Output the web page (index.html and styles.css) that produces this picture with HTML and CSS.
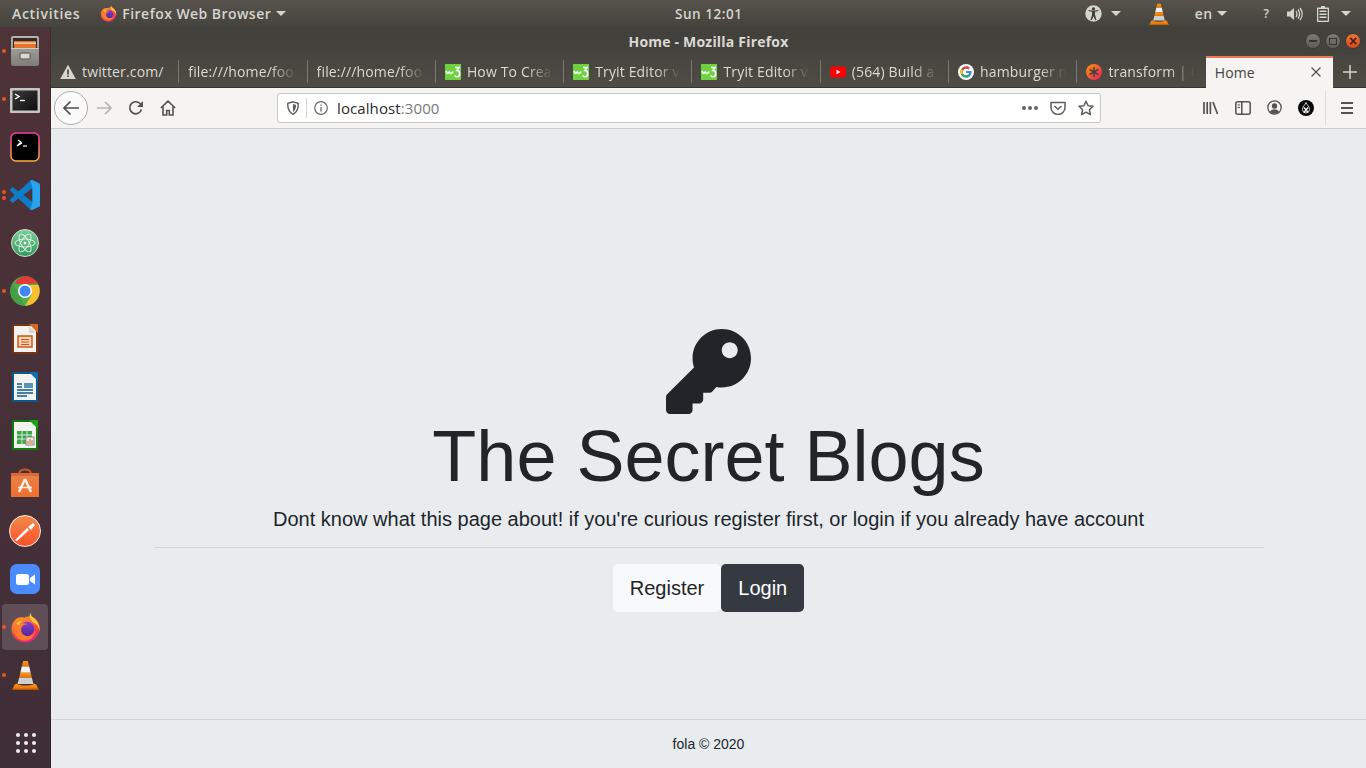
FILE: index.html
```html
<!DOCTYPE html>
<html lang="en">
<head>
<meta charset="utf-8">
<title>Home</title>
<link rel="stylesheet" href="styles.css">
</head>
<body>
<svg class="defs" width="0" height="0" aria-hidden="true">
  <defs>
    <linearGradient id="ffg" x1=".2" y1="0" x2=".6" y2="1"><stop offset="0" stop-color="#ffa02a"/><stop offset=".55" stop-color="#ff4a3a"/><stop offset="1" stop-color="#e3208a"/></linearGradient>
    <linearGradient id="ffp" x1="0" y1="0" x2="0" y2="1"><stop offset="0" stop-color="#8a3fd0"/><stop offset="1" stop-color="#4a2a9a"/></linearGradient>
    <linearGradient id="cone" x1="0" y1="0" x2="0" y2="1"><stop offset="0" stop-color="#ff9a1a"/><stop offset="1" stop-color="#e96d00"/></linearGradient>
    <symbol id="firefox" viewBox="0 0 32 32">
      <path d="M16 31.500C8 31.500 1.500 25.500 1.500 17.500 1.500 13 3.500 9.500 6 7.500 8.500 5.500 12 5 15 6 19 3.500 24 4 27 7.500 30 11 31 14 30.500 18 29.500 25.500 24 31.500 16 31.500z" fill="url(#ffg)"/>
      <path d="M21 .5C21.500 4 23 5.500 26 8 29 10.500 31 14 30.500 19.500 29.500 15 27 11.500 23.500 10.500 21 8 19.500 5 21 .5z" fill="#ffcf3a"/>
      <circle cx="17.500" cy="17.500" r="7.500" fill="url(#ffp)"/>
      <path d="M4 12.500C6 9 10 7.500 14 8.500 12 9.500 11 10.500 10.500 12.500 13 11 16 11.500 17.500 13 14.500 13 12 14.500 11.500 17.500 11 21 14 25 18.500 25 22 25 25 22.500 26 19 26 25 21 29.500 15.500 29.500 9 29.500 4 24 3.500 18 3.300 16 3.500 14 4 12.500z" fill="#ff7a2a"/>
      <path d="M6.500 11.500C8 9.500 10.500 8.800 13 9 11.500 10 10.300 11.500 10 13.500 8.500 13.500 7.300 12.700 6.500 11.500z" fill="#ffc23a"/>
    </symbol>
    <symbol id="vlc" viewBox="0 0 28 32">
      <path d="M11.500 1h5l1.500 6H10z" fill="url(#cone)"/>
      <path d="M10 7h8l1.500 6.500H8.500z" fill="#f2f2f2"/>
      <path d="M8.500 13.500h11l1.300 5.500H7.200z" fill="url(#cone)"/>
      <path d="M7.200 19h13.600l1.700 6.500h-17z" fill="#cfcfcf"/>
      <path d="M5 25l-2.500 1L0 31.500h28L25.500 26 23 25c-1 3-17 3-18 0z" fill="url(#cone)"/>
      <path d="M0 30.500h28l.0 1H0z" fill="#c95f00"/>
    </symbol>
    <symbol id="w3" viewBox="0 0 16 16">
      <rect width="16" height="16" fill="#6fd13f"/>
      <path d="M1 7c.5 2.200 1.700 3 2.500 1.700.4-.8.8-.8 1.200 0 .8 1.400 2.300 1.300 3.300-1.200" fill="none" stroke="#fff" stroke-width="1.600"/>
      <path d="M10 3.500h4l-2 3c1.800 0 2.700 1.300 2.700 3 0 2-1.300 3.300-2.700 3.300-1 0-1.800-.5-2.300-1.300" fill="none" stroke="#fff" stroke-width="1.600"/>
    </symbol>
  </defs>
</svg>

<header class="topbar">
  <div class="top-left">
    <span class="top-item activities">Activities</span>
    <span class="top-app">
      <svg class="ic16" aria-hidden="true"><use href="#firefox"/></svg>
      <span class="top-item">Firefox Web Browser</span>
      <i class="caret"></i>
    </span>
  </div>
  <div class="top-clock">Sun 12:01</div>
  <div class="top-right">
    <span class="tray tray-a11y">
      <svg class="tray-svg" width="17" height="17" viewBox="0 0 17 17" aria-hidden="true"><circle cx="8.500" cy="8.500" r="8.200" fill="#d6d4cf"/><circle cx="8.500" cy="3.900" r="1.600" fill="#3f3e38"/><path d="M3.500 6l3.500.8v3L5.500 15h1.400l1.600-3.800L10.100 15h1.400L10 9.800v-3l3.500-.8-.2-1.100-4.800.9-4.800-.9z" fill="#3f3e38"/></svg>
      <i class="caret"></i>
    </span>
    <svg class="tray-vlc" width="20" height="22" aria-hidden="true"><use href="#vlc"/></svg>
    <span class="tray tray-en"><span class="top-item">en</span><i class="caret"></i></span>
    <span class="tray-q">?</span>
    <svg class="tray-vol" width="16" height="14" viewBox="0 0 16 14" aria-hidden="true"><path d="M0 4.500h3L7 1v12L3 9.500H0z" fill="#d6d4cf"/><path d="M9 4c1.200 1.800 1.200 4.200 0 6M11 2.500c2 2.700 2 6.300 0 9M13 1c2.800 3.600 2.800 8.400 0 12" fill="none" stroke="#d6d4cf" stroke-width="1.300"/></svg>
    <svg class="tray-bat" width="12" height="16" viewBox="0 0 12 16" aria-hidden="true"><path d="M4 0h4v1.500h3c.6 0 1 .4 1 1V15c0 .6-.4 1-1 1H1c-.6 0-1-.4-1-1V2.500c0-.6.4-1 1-1h3z" fill="#d6d4cf"/><path d="M1.300 3h9.400v11.700H1.300z" fill="#4b4a44"/><path d="M2.500 4.500h7v1.500h-7zM2.500 7.500h7V9h-7zM2.500 10.500h7V12h-7z" fill="#d6d4cf"/></svg>
    <i class="caret caret-last"></i>
  </div>
</header>

<div class="desktop">
  <nav class="dock">
    <div class="dock-item"><i class="dot"></i>
      <svg width="30" height="30" viewBox="0 0 30 30" aria-hidden="true"><defs><linearGradient id="cab" x1="0" y1="0" x2="0" y2="1"><stop offset="0" stop-color="#b5b3ae"/><stop offset="1" stop-color="#7f7d78"/></linearGradient></defs><rect x="1" y="0" width="28" height="30" rx="2" fill="url(#cab)"/><rect x="3" y="2" width="24" height="10" fill="#2e2d2a"/><rect x="4" y="5" width="22" height="7" fill="#e2732c"/><rect x="4" y="6.500" width="22" height="1.300" fill="#f6d9b8"/><rect x="1" y="12" width="28" height="1" fill="#cfcdc8"/><rect x="10" y="17" width="10" height="6" rx="1" fill="#d9d7d2" stroke="#55534f"/></svg>
    </div>
    <div class="dock-item dock-term"><i class="dot"></i>
      <svg width="30" height="25" viewBox="0 0 30 25" aria-hidden="true"><defs><linearGradient id="trm" x1="0" y1="0" x2="1" y2="1"><stop offset="0" stop-color="#3a3a3a"/><stop offset="1" stop-color="#0e0e0e"/></linearGradient></defs><rect width="30" height="25" rx="1" fill="#c4c6c3"/><rect x="2.500" y="2.500" width="25" height="20" fill="url(#trm)"/><path d="M5 6l4 2.500L5 11" fill="none" stroke="#fff" stroke-width="1.400"/><path d="M10 12.500h5" stroke="#fff" stroke-width="1.300"/></svg>
    </div>
    <div class="dock-item">
      <svg width="30" height="30" viewBox="0 0 30 30" aria-hidden="true"><defs><linearGradient id="hy" x1="0" y1="0" x2="0" y2="1"><stop offset="0" stop-color="#f038a8"/><stop offset="1" stop-color="#ffb03a"/></linearGradient></defs><rect x="1" y="1" width="28" height="28" rx="5" fill="#000" stroke="url(#hy)" stroke-width="1.500"/><path d="M8 8l3 2-4 4 5-3" fill="none" stroke="#fff" stroke-width="1.200"/><path d="M13 14h4" stroke="#fff" stroke-width="1.200"/></svg>
    </div>
    <div class="dock-item"><i class="dot dot-up"></i><i class="dot dot-down"></i>
      <svg width="30" height="30" viewBox="0 0 100 100" aria-hidden="true"><path fill-rule="evenodd" d="M96 11L75 1a6 6 0 0 0-7 1L28 38 11 25a4 4 0 0 0-5 0L1 30a4 4 0 0 0 0 6L16 50 1 64a4 4 0 0 0 0 6l5 5a4 4 0 0 0 5 0L28 62l40 36a6 6 0 0 0 7 1l21-10a6 6 0 0 0 4-6V17a6 6 0 0 0-4-6zM75 27L45 50l30 23z" fill="#0e7cc8"/><path d="M75 1l21 10a6 6 0 0 1 4 6v66a6 6 0 0 1-4 6L75 99a6 6 0 0 1-7-1L75 73V27L68 2a6 6 0 0 1 7-1z" fill="#2aa3ee"/></svg>
    </div>
    <div class="dock-item">
      <svg width="28" height="28" viewBox="0 0 28 28" aria-hidden="true"><defs><linearGradient id="atom" x1="0" y1="0" x2="0" y2="1"><stop offset="0" stop-color="#7ccf9c"/><stop offset="1" stop-color="#2f9a5c"/></linearGradient></defs><circle cx="14" cy="14" r="13.500" fill="url(#atom)" stroke="#d9d9d5"/><g fill="none" stroke="#e9f5ec" stroke-width=".9"><ellipse cx="14" cy="14" rx="10" ry="4"/><ellipse cx="14" cy="14" rx="10" ry="4" transform="rotate(60 14 14)"/><ellipse cx="14" cy="14" rx="10" ry="4" transform="rotate(120 14 14)"/></g><circle cx="14" cy="14" r="1.500" fill="#fff"/></svg>
    </div>
    <div class="dock-item"><i class="dot"></i>
      <svg width="30" height="30" viewBox="0 0 30 30" aria-hidden="true"><circle cx="15" cy="15" r="14.700" fill="#4caf50"/><path d="M15 .3A14.700 14.700 0 0 1 27.700 7.600L15 8H4.200A14.700 14.700 0 0 1 15 .3z" fill="#e53935"/><path d="M2.800 7L9 18l5.500 11.700A14.700 14.700 0 0 1 .3 15 14.700 14.700 0 0 1 2.800 7z" fill="#43a047"/><path d="M28.400 9A14.700 14.700 0 0 1 15 29.700L21.500 19 20 9z" fill="#fbc02d"/><circle cx="15" cy="15" r="7" fill="#fff"/><circle cx="15" cy="15" r="5.500" fill="#4285f4"/></svg>
    </div>
    <div class="dock-item">
      <svg width="26" height="30" viewBox="0 0 26 30" aria-hidden="true"><rect width="26" height="30" rx="1.500" fill="#7a3310"/><rect x="2" y="2" width="22" height="26" fill="#f4f2ee"/><path d="M17 0h9v9z" fill="#d9671f"/><path d="M17 2v7h7" fill="#d8d6d0"/><rect x="6" y="12" width="14" height="11" fill="#f7d3b4" stroke="#c75a1a" stroke-width="1.500"/><path d="M9 15.500h8M9 18h8M9 20.500h8" stroke="#c75a1a"/></svg>
    </div>
    <div class="dock-item">
      <svg width="26" height="30" viewBox="0 0 26 30" aria-hidden="true"><rect width="26" height="30" rx="1.500" fill="#0a5a8c"/><rect x="2" y="2" width="22" height="26" fill="#f4f2ee"/><path d="M17 0h9v9z" fill="#0a6fb0"/><path d="M5 12h5M5 15h5M5 18h16M5 21h16M5 24h10" stroke="#0a5a8c" stroke-width="1.500"/><rect x="12" y="11" width="9" height="5" fill="#5a91b5"/></svg>
    </div>
    <div class="dock-item">
      <svg width="26" height="30" viewBox="0 0 26 30" aria-hidden="true"><rect width="26" height="30" rx="1.500" fill="#0f7a0f"/><rect x="2" y="2" width="22" height="26" fill="#f4f2ee"/><path d="M17 0h9v9z" fill="#13a313"/><rect x="5" y="11" width="15" height="13" fill="#3aa84a"/><path d="M5 15h15M5 19h15M10 11v13M15 11v13" stroke="#e8f5e9" stroke-width=".9"/><rect x="14" y="17" width="8" height="8" fill="#eeeeec" stroke="#888"/><path d="M16 24v-3M18 24v-5M20 24v-4" stroke="#d9671f"/></svg>
    </div>
    <div class="dock-item">
      <svg width="30" height="30" viewBox="0 0 30 30" aria-hidden="true"><defs><linearGradient id="bag" x1="0" y1="0" x2="0" y2="1"><stop offset="0" stop-color="#e8824a"/><stop offset="1" stop-color="#ef7030"/></linearGradient></defs><path d="M9 6c0-6 12-6 12 0" fill="none" stroke="#c9562a" stroke-width="2"/><path d="M1 5h28v24H1z" fill="url(#bag)"/><path d="M1 5h28v3H1z" fill="#d9693a"/><path d="M15 11l-6 13M15 11l6 13" stroke="#fdf0e6" stroke-width="2.400" fill="none"/><path d="M8 19.500h14" stroke="#fdf0e6" stroke-width="1.600"/></svg>
    </div>
    <div class="dock-item">
      <svg width="32" height="32" viewBox="0 0 32 32" aria-hidden="true"><defs><linearGradient id="pm" x1="0" y1="0" x2="0" y2="1"><stop offset="0" stop-color="#f58a4a"/><stop offset="1" stop-color="#f9502a"/></linearGradient></defs><circle cx="16" cy="16" r="15.500" fill="url(#pm)" stroke="#f2efe9"/><path d="M6 25l2 1 12-11-2-2zM19 12l3 3 4-5-2-2z" fill="#fff"/></svg>
    </div>
    <div class="dock-item">
      <svg width="30" height="30" viewBox="0 0 30 30" aria-hidden="true"><rect width="30" height="30" rx="7" fill="#4a8cff"/><rect x="6" y="10" width="13" height="11" rx="2.500" fill="#fff"/><path d="M20 14l5-3.500v10L20 17z" fill="#fff"/></svg>
    </div>
    <div class="dock-item dock-active"><i class="dot"></i>
      <svg width="31" height="31" aria-hidden="true"><use href="#firefox"/></svg>
    </div>
    <div class="dock-item"><i class="dot"></i>
      <svg width="27" height="30" aria-hidden="true"><use href="#vlc"/></svg>
    </div>
    <div class="dock-grid" aria-hidden="true">
      <i></i><i></i><i></i><i></i><i></i><i></i><i></i><i></i><i></i>
    </div>
  </nav>

  <div class="window">
    <div class="titlebar">
      <span class="win-title">Home - Mozilla Firefox</span>
      <div class="win-btns">
        <span class="win-btn"><i class="glyph-min"></i></span>
        <span class="win-btn"><i class="glyph-max"></i></span>
        <span class="win-btn win-close">×</span>
      </div>
    </div>
    <div class="tabstrip">
      <div class="tab">
        <svg class="fav" viewBox="0 0 16 16" aria-hidden="true"><path d="M8 .8l7.800 14.200H.2z" fill="#d8d6d0"/><path d="M7.200 5.500h1.600v5H7.200zM7.200 11.500h1.600v1.600H7.200z" fill="#45433d"/></svg>
        <span class="tab-text tab-text-full">twitter.com/</span>
      </div>
      <div class="tab"><span class="tab-text">file:///home/foo</span></div>
      <div class="tab"><span class="tab-text">file:///home/foo</span></div>
      <div class="tab"><svg class="fav" aria-hidden="true"><use href="#w3"/></svg><span class="tab-text">How To Creat</span></div>
      <div class="tab"><svg class="fav" aria-hidden="true"><use href="#w3"/></svg><span class="tab-text">Tryit Editor v</span></div>
      <div class="tab"><svg class="fav" aria-hidden="true"><use href="#w3"/></svg><span class="tab-text">Tryit Editor v</span></div>
      <div class="tab">
        <svg class="fav" viewBox="0 0 16 16" aria-hidden="true"><rect y="2.500" width="16" height="11" rx="3" fill="#f00"/><path d="M6.500 5.800L10.500 8l-4 2.200z" fill="#fff"/></svg>
        <span class="tab-text">(564) Build a</span>
      </div>
      <div class="tab">
        <svg class="fav" viewBox="0 0 16 16" aria-hidden="true"><circle cx="8" cy="8" r="8" fill="#fff"/><path d="M13.400 6.900H8v2.200h3.100c-.3 1.500-1.500 2.300-3.100 2.300A3.400 3.400 0 0 1 8 4.600c.9 0 1.600.3 2.200.8l1.600-1.600A5.600 5.600 0 1 0 8 13.600c3 0 5.600-2.200 5.600-5.600 0-.4 0-.8-.2-1.100z" fill="#4285f4"/><path d="M3.100 5.300L5 6.700A3.400 3.400 0 0 1 8 4.600c.9 0 1.600.3 2.200.8l1.600-1.600A5.600 5.600 0 0 0 3.100 5.300z" fill="#ea4335"/><path d="M3 10.700l1.900-1.500a3.400 3.400 0 0 1 0-2.500L3.100 5.300a5.600 5.600 0 0 0 0 5.400z" fill="#fbbc05"/><path d="M8 13.600c1.500 0 2.800-.5 3.800-1.400l-1.800-1.400c-.5.400-1.200.6-2 .6a3.400 3.400 0 0 1-3.100-2.200L3 10.700a5.600 5.600 0 0 0 5 2.900z" fill="#34a853"/></svg>
        <span class="tab-text">hamburger m</span>
      </div>
      <div class="tab">
        <svg class="fav" viewBox="0 0 16 16" aria-hidden="true"><defs><linearGradient id="cu" x1="0" y1="0" x2="1" y2="1"><stop offset="0" stop-color="#ff9a00"/><stop offset="1" stop-color="#e6186d"/></linearGradient></defs><circle cx="8" cy="8" r="8" fill="url(#cu)"/><path d="M8 3v10M3.700 5.500l8.600 5M3.700 10.500l8.600-5" stroke="#45433d" stroke-width="1.600"/></svg>
        <span class="tab-text">transform | C</span>
      </div>
      <div class="tab tab-active">
        <span class="tab-name">Home</span>
        <svg class="tab-x" width="12" height="12" viewBox="0 0 12 12" aria-hidden="true"><path d="M1.500 1.500l9 9M10.500 1.500l-9 9" stroke="#55534f" stroke-width="1.300"/></svg>
      </div>
      <svg class="tab-new" width="14" height="14" viewBox="0 0 14 14" aria-hidden="true"><path d="M7 0v14M0 7h14" stroke="#d6d4cf" stroke-width="1.500"/></svg>
    </div>
    <div class="toolbar">
      <span class="back-btn">
        <svg width="18" height="16" viewBox="0 0 18 16" aria-hidden="true"><path d="M17 8H2M8.500 1.500L2 8l6.500 6.500" fill="none" stroke="#4d4c49" stroke-width="1.700"/></svg>
      </span>
      <svg class="tb-forward" width="17" height="16" viewBox="0 0 18 16" aria-hidden="true"><path d="M1 8h15M9.500 1.500L16 8l-6.500 6.500" fill="none" stroke="#b5b4b1" stroke-width="1.700"/></svg>
      <svg class="tb-reload" width="16" height="16" viewBox="0 0 16 16" aria-hidden="true"><path d="M13.500 9.500A6 6 0 1 1 12 3.500l2 2" fill="none" stroke="#55534f" stroke-width="1.700"/><path d="M15 1v6H9z" fill="#55534f"/></svg>
      <svg class="tb-home" width="16" height="16" viewBox="0 0 16 16" aria-hidden="true"><path d="M.8 8L8 1.200 15.200 8M3 6.500V15h3.700v-4.500h2.600V15H13V6.500" fill="none" stroke="#55534f" stroke-width="1.600"/></svg>
      <div class="urlbar">
        <svg class="url-shield" width="12" height="14" viewBox="0 0 12 14" aria-hidden="true"><path d="M6 .8L11.200 2.300c.3 5-1.200 9-5.200 11-4-2-5.500-6-5.200-11z" fill="none" stroke="#5d5c59" stroke-width="1.400"/><path d="M6 3v8c2-1.300 3-3.800 3.100-6.900z" fill="#5d5c59"/></svg>
        <span class="url-sep"></span>
        <svg class="url-info" width="14" height="14" viewBox="0 0 14 14" aria-hidden="true"><circle cx="7" cy="7" r="6.300" fill="none" stroke="#6b6a67" stroke-width="1.200"/><path d="M7 6v4.500M7 3.500v1.300" stroke="#6b6a67" stroke-width="1.300"/></svg>
        <span class="url-text">localhost<span class="url-port">:3000</span></span>
        <span class="url-dots"><i></i><i></i><i></i></span>
        <svg class="url-pocket" width="16" height="14" viewBox="0 0 16 14" aria-hidden="true"><path d="M1 1.500h14v5a7 7 0 0 1-14 0z" fill="none" stroke="#5d5c59" stroke-width="1.500" stroke-linejoin="round"/><path d="M4.500 5L8 8.300 11.500 5" fill="none" stroke="#5d5c59" stroke-width="1.500"/></svg>
        <svg class="url-star" width="16" height="16" viewBox="0 0 16 16" aria-hidden="true"><path d="M8 1.200l2.100 4.500 4.900.6-3.600 3.400.9 4.900L8 12.200l-4.300 2.400.9-4.900L1 6.300l4.900-.6z" fill="none" stroke="#5d5c59" stroke-width="1.500" stroke-linejoin="round"/></svg>
      </div>
      <div class="tb-right">
        <svg width="16" height="14" viewBox="0 0 16 14" aria-hidden="true"><path d="M1 1v12M4.200 1v12M7.400 1v12M10 1l4.500 12" stroke="#55534f" stroke-width="1.700" fill="none"/></svg>
        <svg width="16" height="14" viewBox="0 0 16 14" aria-hidden="true"><rect x=".8" y=".8" width="14.400" height="12.400" rx="2" fill="none" stroke="#55534f" stroke-width="1.500"/><path d="M6.800 1v12" stroke="#55534f" stroke-width="1.500"/><path d="M2.500 4h2.600M2.500 6.500h2.600" stroke="#55534f"/></svg>
        <svg width="15" height="15" viewBox="0 0 15 15" aria-hidden="true"><circle cx="7.500" cy="7.500" r="6.700" fill="none" stroke="#55534f" stroke-width="1.300"/><circle cx="7.500" cy="6" r="2.700" fill="#55534f"/><path d="M2.900 12c1-2 2.800-2.700 4.600-2.700s3.600.7 4.600 2.700c-2.500 2.200-6.700 2.200-9.200 0z" fill="#55534f"/></svg>
        <svg width="16" height="16" viewBox="0 0 16 16" aria-hidden="true"><circle cx="8" cy="8" r="8" fill="#0a0a0a"/><path d="M8 2.500C9 5 11.500 6.500 11.500 9.500A3.500 3.500 0 0 1 4.500 9.500C4.500 6.500 7 5 8 2.500z" fill="#0a0a0a" stroke="#fff" stroke-width=".8"/><path d="M6 7.500l4 5M10 7.500l-4 5" stroke="#fff" stroke-width="1.300"/></svg>
      </div>
      <span class="tb-sep"></span>
      <span class="tb-menu"><i></i><i></i><i></i></span>
    </div>

    <main class="page">
      <section class="hero">
        <svg class="key" viewBox="0 0 512 512" aria-hidden="true"><path d="M512 176.001C512 273.203 433.202 352 336 352c-11.220 0-22.190-1.062-32.827-3.069l-24.012 27.014A23.999 23.999 0 0 1 261.223 384H224v40c0 13.255-10.745 24-24 24h-40v40c0 13.255-10.745 24-24 24H24c-13.255 0-24-10.745-24-24v-78.059c0-6.365 2.529-12.470 7.029-16.971l161.802-161.802C163.108 213.814 160 195.271 160 176 160 78.798 238.797.001 335.999 0 433.488-.001 512 78.511 512 176.001zM336 128c0 26.510 21.490 48 48 48s48-21.490 48-48-21.490-48-48-48-48 21.490-48 48z"/></svg>
        <h1 class="hero-title">The Secret Blogs</h1>
        <p class="lead">Dont know what this page about! if you're curious register first, or login if you already have account</p>
        <hr class="rule">
        <div class="actions">
          <a class="btn btn-light">Register</a>
          <a class="btn btn-dark">Login</a>
        </div>
      </section>
      <footer class="footer">fola © 2020</footer>
    </main>
  </div>
</div>
</body>
</html>
```
FILE: styles.css
```css
* { box-sizing: border-box; }
html, body { margin: 0; height: 100%; }
body {
  width: 1366px;
  height: 768px;
  overflow: hidden;
  display: flex;
  flex-direction: column;
  font-family: "Liberation Sans", Arial, sans-serif;
  background: #e9ecef;
  color: #212529;
}
.defs { position: absolute; }
i { display: block; }

/* Top bar */
.topbar {
  flex: 0 0 27px;
  display: flex;
  align-items: center;
  justify-content: space-between;
  background: linear-gradient(#57534c, #45433d);
  color: #d6d4cf;
  font-family: "Open Sans", "Noto Sans", sans-serif;
  font-size: 14px;
  font-weight: 600;
  position: relative;
}
.top-left { display: flex; align-items: center; padding-left: 12px; }
.top-item { letter-spacing: .45px; white-space: nowrap; }
.top-item.activities { letter-spacing: .7px; margin-right: 20px; }
.top-app { display: flex; align-items: center; }
.ic16 { width: 17px; height: 17px; margin-right: 5px; }
.caret {
  width: 0;
  height: 0;
  border-left: 5px solid transparent;
  border-right: 5px solid transparent;
  border-top: 5px solid #d6d4cf;
  margin-left: 5px;
}
.top-clock {
  position: absolute;
  left: 675px;
  font-size: 13.5px;
  letter-spacing: .55px;
}
.top-right { display: flex; align-items: center; }
.tray { display: flex; align-items: center; }
.tray-a11y { margin-right: 28px; }
.tray-a11y .caret { margin-left: 9px; }
.tray-vlc { margin-right: 26px; }
.tray-en { margin-right: 37px; }
.tray-en .caret { margin-left: 4px; }
.tray-q { font-size: 12px; margin-right: 18px; }
.tray-vol { margin-right: 14px; }
.tray-bat { margin-right: 12px; }
.caret-last { margin: 0 15px 0 0; }

.desktop { flex: 1; display: flex; min-height: 0; }

/* Dock */
.dock {
  flex: 0 0 51px;
  display: flex;
  flex-direction: column;
  align-items: center;
  background: linear-gradient(#4e3338, #402e38);
  box-shadow: inset -1px 0 0 rgba(0,0,0,.15);
}
.dock-item {
  flex: 0 0 48px;
  width: 46px;
  margin-right: 1px;
  display: flex;
  align-items: center;
  justify-content: center;
  position: relative;
  border-radius: 4px;
}
.dock-term svg { margin-top: 2px; }
.dock-active { background: rgba(255,255,255,.15); flex-basis: 46px; margin: 1px 1px 1px 0; }
.dot {
  position: absolute;
  left: 0;
  top: 22px;
  width: 4px;
  height: 4px;
  border-radius: 50%;
  background: #e95420;
}
.dock-active .dot { top: 21px; }
.dot-up { top: 19px; }
.dot-down { top: 25px; }
.dock-grid {
  margin-top: auto;
  margin-bottom: 15px;
  display: grid;
  grid-template-columns: repeat(3, 4px);
  gap: 4px;
}
.dock-grid i { width: 4px; height: 4px; border-radius: 50%; background: #eeeeec; }

/* Window */
.window { flex: 1; display: flex; flex-direction: column; min-width: 0; }
.titlebar {
  flex: 0 0 28px;
  display: flex;
  align-items: center;
  justify-content: center;
  position: relative;
  background: linear-gradient(#42403a, #45433d);
  color: #dbd9d4;
  font-family: "Open Sans", "Noto Sans", sans-serif;
  font-size: 14px;
  font-weight: 700;
}
.win-title { letter-spacing: .2px; }
.win-btns {
  position: absolute;
  right: 5px;
  top: 6px;
  display: flex;
  gap: 4px;
}
.win-btn {
  width: 16px;
  height: 16px;
  border-radius: 50%;
  background: linear-gradient(#7a7873, #5f5d58);
  border: 1px solid #3c3b37;
  display: flex;
  align-items: center;
  justify-content: center;
}
.glyph-min { width: 8px; height: 1.500px; background: #35342f; }
.glyph-max { width: 8px; height: 7px; border: 1px solid #35342f; }
.win-close {
  background: linear-gradient(#f0733c, #d9491a);
  color: #45201a;
  font-family: "Liberation Sans", sans-serif;
  font-size: 14px;
  font-weight: 700;
  line-height: 1;
}

.tabstrip {
  flex: 0 0 33px;
  display: flex;
  align-items: stretch;
  background: linear-gradient(#47453f, #4f4c45);
  border-bottom: 1px solid #35342f;
  font-family: "Open Sans", "Noto Sans", sans-serif;
  font-size: 14px;
  letter-spacing: .15px;
  color: #dcdad5;
}
.tab {
  flex: 0 0 128.3px;
  display: flex;
  align-items: center;
  padding: 1px 5px 0 9px;
  position: relative;
  min-width: 0;
}
.tab:not(.tab-active)::after {
  content: "";
  position: absolute;
  right: 0;
  top: 5px;
  bottom: 4px;
  width: 1px;
  background: #7a7872;
}
.tab:nth-child(9)::after { display: none; }
.fav { width: 16px; height: 16px; flex: 0 0 16px; margin-right: 6px; }
.tab-text {
  flex: 1;
  min-width: 0;
  overflow: hidden;
  white-space: nowrap;
  -webkit-mask-image: linear-gradient(to right, #000 calc(100% - 32px), transparent calc(100% - 6px));
  mask-image: linear-gradient(to right, #000 calc(100% - 32px), transparent calc(100% - 6px));
}
.tab-text-full { -webkit-mask-image: none; mask-image: none; }
.tab-active {
  flex: 0 0 127.5px;
  background: #f5f4f2;
  color: #45433d;
  border-top: 2px solid #ee7a55;
  margin-top: 1px;
  margin-bottom: -1px;
  padding: 0 10px 2px 9px;
  justify-content: space-between;
}
.tab-x { margin-right: 1px; }
.tab-new { align-self: center; margin-left: 10px; margin-top: 1px; }

/* Toolbar */
.toolbar {
  flex: 0 0 41px;
  display: flex;
  align-items: center;
  background: #f5f4f2;
  border-bottom: 1px solid #cfcdc9;
  padding: 0 0 1px 3px;
}
.back-btn {
  width: 34px;
  height: 34px;
  border-radius: 50%;
  border: 1px solid #b0aeaa;
  background: #fbfafa;
  display: flex;
  align-items: center;
  justify-content: center;
  flex: none;
}
.tb-forward { margin-left: 8px; flex: none; }
.tb-reload { margin-left: 15px; flex: none; }
.tb-home { margin-left: 16px; flex: none; }
.urlbar {
  width: 824px;
  height: 30px;
  margin-left: 101px;
  flex: none;
  display: flex;
  align-items: center;
  background: #fff;
  border: 1px solid #c9c7c3;
  border-radius: 3px;
  padding: 0 6px 0 9px;
  font-family: "Open Sans", "Noto Sans", sans-serif;
  font-size: 15px;
  letter-spacing: .1px;
  color: #2b2a28;
}
.url-sep { width: 1px; height: 20px; background: #d8d7d4; margin: 0 7px 0 7px; }
.url-text { margin-left: 9px; flex: 1; padding-top: 1px; }
.url-port { color: #777; }
.url-dots { display: flex; gap: 2px; margin-right: 12px; }
.url-dots i { width: 4px; height: 4px; border-radius: 50%; background: #66645f; }
.url-pocket { margin-right: 12px; }
.tb-right {
  display: flex;
  align-items: center;
  gap: 16px;
  margin-left: 102px;
}
.tb-sep { width: 1px; height: 34px; background: #dcdbd8; margin-left: 11px; }
.tb-menu { display: flex; flex-direction: column; gap: 3px; margin-left: 15px; }
.tb-menu i { width: 12px; height: 2px; background: #55534f; }

/* Page */
.page { flex: 1; display: flex; flex-direction: column; min-height: 0; background: #e9ecef; }
.hero {
  flex: 1;
  display: flex;
  flex-direction: column;
  align-items: center;
  padding-top: 200px;
}
.key { width: 85px; height: 85px; fill: #212529; display: block; flex: none; }
.hero-title {
  margin: -1px 0 0;
  font-size: 72px;
  font-weight: 400;
  line-height: 86px;
  text-align: center;
}
.lead {
  margin: 5px 0 13px;
  font-size: 20px;
  line-height: 30px;
  text-align: center;
}
.rule {
  width: 1110px;
  margin: 0 0 16px;
  border: 0;
  border-top: 1px solid #d2d5d8;
}
.actions { display: flex; }
.btn {
  display: block;
  height: 48px;
  padding: 0 16px;
  font-size: 20px;
  line-height: 46px;
  border-radius: 4.800px;
  border: 1px solid transparent;
}
.btn-light { background: #f8f9fa; color: #212529; }
.btn-dark { background: #343a40; color: #fff; }
.footer {
  flex: 0 0 49px;
  border-top: 1px solid #d2d5d8;
  display: flex;
  align-items: center;
  justify-content: center;
  font-size: 14px;
  padding-bottom: 1px;
}
```
